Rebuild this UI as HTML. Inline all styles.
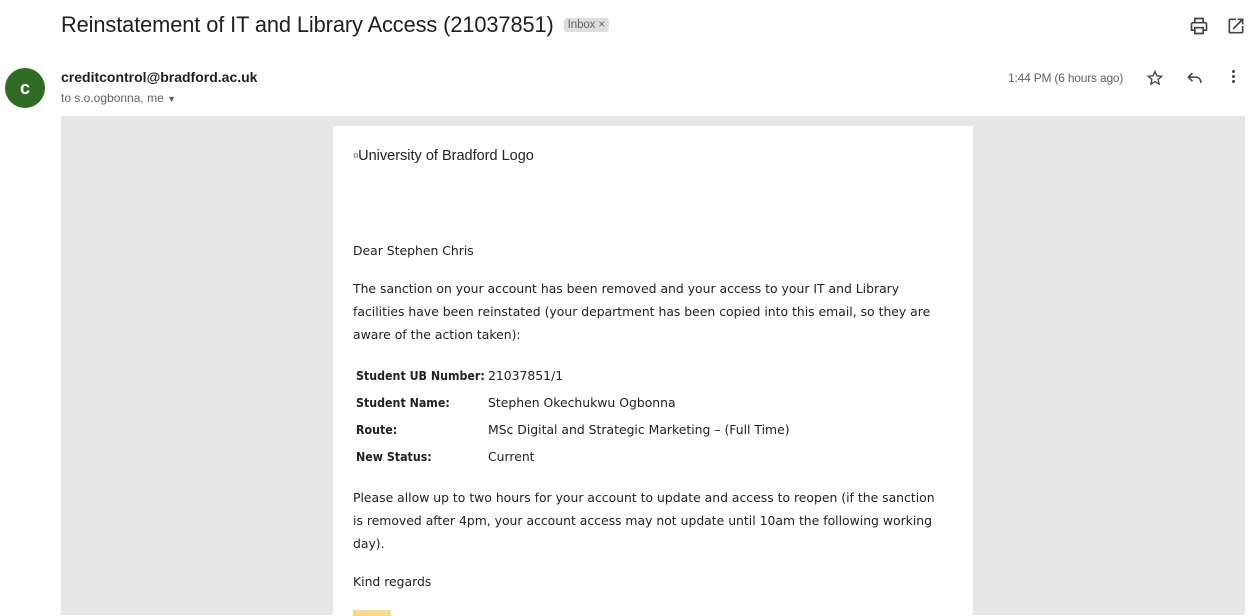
<!DOCTYPE html>
<html><head><style>
body{margin:0;width:1252px;height:615px;overflow:hidden;background:#fff;font-family:"Liberation Sans",Arial,sans-serif;position:relative}
.a{position:absolute}
.title{left:61px;top:12px;font-size:21.8px;color:#1f1f1f;white-space:nowrap;letter-spacing:-0.1px}
.lbl{display:inline-block;background:#ddd;color:#666;font-size:11.5px;padding:1px 4px;border-radius:3px;vertical-align:4px;margin-left:10px}
.av{left:5px;top:68px;width:40px;height:40px;border-radius:50%;background:#2f6b22;color:#fff;font-size:18px;font-weight:bold;text-align:center;line-height:40px}
.grey{left:61px;top:116px;width:1184px;height:499px;background:#e6e6e6}
.card{left:333px;top:126px;width:640px;height:489px;background:#fff;font-family:"DejaVu Sans",sans-serif;font-size:12.4px;color:#222}
.card p{margin:0;position:absolute;left:20px;width:594px;line-height:23px;letter-spacing:0}
.r{position:absolute;left:23px;height:27px;line-height:27px;white-space:nowrap}
.r b{display:inline-block;width:132px;font-family:"DejaVu Sans Condensed","DejaVu Sans",sans-serif;font-stretch:condensed;font-size:12.3px}
</style></head><body>
<div class="a title">Reinstatement of IT and Library Access (21037851)<span class="lbl">Inbox ×</span></div>
<svg class="a" style="left:1189px;top:16px" width="20" height="20" viewBox="0 0 24 24"><path fill="none" stroke="#444" stroke-width="2" d="M7 8V3h10v5M6 17H3v-7a2 2 0 0 1 2-2h14a2 2 0 0 1 2 2v7h-3M7 14h10v7H7z"/></svg>
<svg class="a" style="left:1226px;top:16px" width="20" height="20" viewBox="0 0 24 24"><path fill="#444" d="M19 19H5V5h7V3H5a2 2 0 0 0-2 2v14a2 2 0 0 0 2 2h14c1.1 0 2-.9 2-2v-7h-2v7zM14 3v2h3.59l-9.83 9.83 1.41 1.41L19 6.41V10h2V3h-7z"/></svg>
<div class="a av">c</div>
<div class="a" style="left:61px;top:69px;font-size:14px;font-weight:bold;color:#1f1f1f">creditcontrol@bradford.ac.uk</div>
<div class="a" style="left:61px;top:91px;font-size:12px;color:#5f6368">to s.o.ogbonna, me <span style="font-size:9px">▼</span></div>
<div class="a" style="left:1008px;top:71px;font-size:12px;color:#5f6368;letter-spacing:-0.2px">1:44 PM (6 hours ago)</div>
<svg class="a" style="left:1145px;top:68px" width="20" height="20" viewBox="0 0 24 24"><path fill="#444" d="M22 9.24l-7.19-.62L12 2 9.19 8.63 2 9.24l5.46 4.73L5.82 21 12 17.27 18.18 21l-1.63-7.03L22 9.24zM12 15.4l-3.76 2.27 1-4.28-3.32-2.88 4.38-.38L12 6.1l1.71 4.04 4.38.38-3.32 2.88 1 4.28L12 15.4z"/></svg>
<svg class="a" style="left:1185px;top:68px" width="20" height="20" viewBox="0 0 24 24"><path fill="none" stroke="#444" stroke-width="1.8" d="M9 6L4 11l5 5M4 11h9c4 0 6 3 6 7"/></svg>
<div class="a" style="left:1232px;top:70px;width:4px"><div style="width:3px;height:3px;background:#444;border-radius:50%;margin-bottom:2px"></div><div style="width:3px;height:3px;background:#444;border-radius:50%;margin-bottom:2px"></div><div style="width:3px;height:3px;background:#444;border-radius:50%"></div></div>
<div class="a grey"></div>
<div class="a card">
<div style="position:absolute;left:20px;top:22px;font-family:'Liberation Sans',sans-serif;font-size:14.5px;color:#222">▫University of Bradford Logo</div>
<p style="top:113px">Dear Stephen Chris</p>
<p style="top:151px">The sanction on your account has been removed and your access to your IT and Library facilities have been reinstated (your department has been copied into this email, so they are aware of the action taken):</p>
<div class="r" style="top:236px"><b>Student UB Number:</b>21037851/1</div>
<div class="r" style="top:263px"><b>Student Name:</b>Stephen Okechukwu Ogbonna</div>
<div class="r" style="top:290px"><b>Route:</b>MSc Digital and Strategic Marketing – (Full Time)</div>
<div class="r" style="top:317px"><b>New Status:</b>Current</div>
<p style="top:360px">Please allow up to two hours for your account to update and access to reopen (if the sanction is removed after 4pm, your account access may not update until 10am the following working day).</p>
<p style="top:444px">Kind regards</p>
<div style="position:absolute;left:20px;top:484px;width:38px;height:6px;background:#f5dc8a"></div>
</div>
</body></html>
